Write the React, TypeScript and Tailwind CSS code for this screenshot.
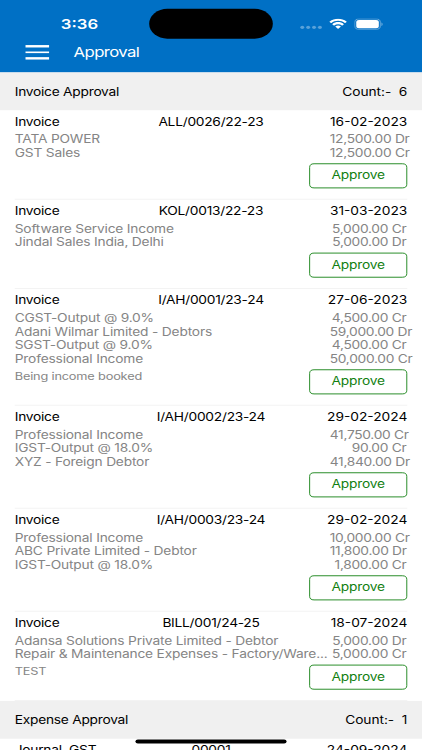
import React from "react";

type Entry = { name: string; amount: string };

type Voucher = {
  type: string;
  number: string;
  date: string;
  entries: Entry[];
  note?: string;
};

const invoices: Voucher[] = [
  {
    type: "Invoice",
    number: "ALL/0026/22-23",
    date: "16-02-2023",
    entries: [
      { name: "TATA POWER", amount: "12,500.00 Dr" },
      { name: "GST Sales", amount: "12,500.00 Cr" },
    ],
  },
  {
    type: "Invoice",
    number: "KOL/0013/22-23",
    date: "31-03-2023",
    entries: [
      { name: "Software Service Income", amount: "5,000.00 Cr" },
      { name: "Jindal Sales India, Delhi", amount: "5,000.00 Dr" },
    ],
  },
  {
    type: "Invoice",
    number: "I/AH/0001/23-24",
    date: "27-06-2023",
    entries: [
      { name: "CGST-Output @ 9.0%", amount: "4,500.00 Cr" },
      { name: "Adani Wilmar Limited - Debtors", amount: "59,000.00 Dr" },
      { name: "SGST-Output @ 9.0%", amount: "4,500.00 Cr" },
      { name: "Professional Income", amount: "50,000.00 Cr" },
    ],
    note: "Being income booked",
  },
  {
    type: "Invoice",
    number: "I/AH/0002/23-24",
    date: "29-02-2024",
    entries: [
      { name: "Professional Income", amount: "41,750.00 Cr" },
      { name: "IGST-Output @ 18.0%", amount: "90.00 Cr" },
      { name: "XYZ - Foreign Debtor", amount: "41,840.00 Dr" },
    ],
  },
  {
    type: "Invoice",
    number: "I/AH/0003/23-24",
    date: "29-02-2024",
    entries: [
      { name: "Professional Income", amount: "10,000.00 Cr" },
      { name: "ABC Private Limited - Debtor", amount: "11,800.00 Dr" },
      { name: "IGST-Output @ 18.0%", amount: "1,800.00 Cr" },
    ],
  },
  {
    type: "Invoice",
    number: "BILL/001/24-25",
    date: "18-07-2024",
    entries: [
      { name: "Adansa Solutions Private Limited - Debtor", amount: "5,000.00 Dr" },
      { name: "Repair & Maintenance Expenses - Factory/Ware...", amount: "5,000.00 Cr" },
    ],
    note: "TEST",
  },
];

function StatusBar() {
  return (
    <div className="flex h-[59px] items-center pl-[62px] pr-[40px]">
      <span className="w-[90px] text-[17px] font-semibold leading-5">3:36</span>
      <div className="h-[37px] w-[126px] rounded-full bg-black" />
      <div className="ml-auto flex items-center">
        <div className="mt-2 mr-[7px] flex gap-[2px]">
          <i className="size-1 rounded-full bg-white/35" />
          <i className="size-1 rounded-full bg-white/35" />
          <i className="size-1 rounded-full bg-white/35" />
          <i className="size-1 rounded-full bg-white/35" />
        </div>
        <svg className="mr-[7px] h-[14px] w-[19px]" viewBox="0 0 19 14" fill="white">
          <path d="M9.5 2.9c2.6 0 5 1 6.8 2.7.2.1.4.1.5 0l1.3-1.3c.2-.2.2-.4 0-.6C13.3-.9 5.7-.9.9 3.7c-.2.2-.2.4 0 .6l1.3 1.3c.1.1.4.1.5 0C4.5 3.9 6.9 2.9 9.5 2.9z" />
          <path d="M9.5 7.2c1.4 0 2.8.5 3.9 1.5.2.1.4.1.5 0l1.3-1.4c.2-.2.2-.4 0-.6-3.2-3-8.2-3-11.400 0-.2.2-.2.4 0 .6l1.300 1.400c.1.1.4.1.5 0C6.700 7.700 8.100 7.200 9.500 7.200z" />
          <path d="M12.100 10.200c.2-.2.2-.4 0-.5-1.500-1.300-3.700-1.300-5.200 0-.2.1-.2.4 0 .5l2.300 2.400c.2.2.4.2.6 0z" />
        </svg>
        <svg className="h-[14px] w-[29px]" viewBox="0 0 29 14">
          <rect x="0.5" y="0.5" width="26" height="13" rx="4.2" fill="none" stroke="white" strokeOpacity="0.45" />
          <rect x="2" y="2" width="23" height="10" rx="2.8" fill="white" />
          <path d="M27.7 5v4.2c.8-.4 1.3-1.2 1.3-2.1s-.5-1.700-1.300-2.100z" fill="white" fillOpacity="0.5" />
        </svg>
      </div>
    </div>
  );
}

function SectionHeader({ title, count }: { title: string; count: number }) {
  return (
    <div className="flex h-[47px] items-center justify-between bg-[#f0f0f0] px-[15px] text-black">
      <span className="tracking-[-0.25px]">{title}</span>
      <span className="whitespace-pre tracking-[-0.05px]">Count:-{"  "}{count}</span>
    </div>
  );
}

function VoucherTitle({ type, number, date }: { type: string; number: string; date: string }) {
  return (
    <div className="grid grid-cols-[1fr_auto_1fr] text-black">
      <span className="tracking-[-0.25px]">{type}</span>
      <span className="tracking-[-0.25px]">{number}</span>
      <span className="text-right">{date}</span>
    </div>
  );
}

function VoucherRow({ voucher }: { voucher: Voucher }) {
  return (
    <div className="mx-[15px] border-b border-[#f0f0f0] pt-[5px] pb-[13px] text-[#858585]">
      <VoucherTitle type={voucher.type} number={voucher.number} date={voucher.date} />
      <div className="mt-[5px] tracking-[-0.18px]">
        {voucher.entries.map((entry) => (
          <div key={entry.name} className="flex">
            <span className="w-[317px] whitespace-nowrap">{entry.name}</span>
            {/* long amounts run past the right edge */}
            <span className="ml-[4px] w-[78px] shrink-0 text-right whitespace-nowrap tracking-[-0.28px]">
              {entry.amount}
            </span>
          </div>
        ))}
      </div>
      <div className="mt-[5px] flex items-start justify-between tracking-[-0.18px]">
        <span className="text-[13px]">{voucher.note}</span>
        <button className="h-[31px] w-[100px] rounded-[5px] border border-[#118011] pb-[3px] text-[#118011]">
          Approve
        </button>
      </div>
    </div>
  );
}

export default function App() {
  return (
    <div className="h-[750px] w-[422px] overflow-hidden bg-white">
      {/* 430x932 device screen, scaled to the frame */}
      <div className="relative h-[932px] w-[430px] origin-top-left scale-x-[0.9814] scale-y-[0.8047] overflow-hidden bg-white font-['Inter',sans-serif] text-[14px] leading-[17px]">
        <header className="h-[90px] bg-[#0070c5] text-white">
          <StatusBar />
          <div className="-mt-[3px] flex items-center pl-[26px]">
            <div className="flex w-6 flex-col gap-[5px]">
              <i className="h-[2.6px] bg-white" />
              <i className="h-[2.6px] bg-white" />
              <i className="h-[2.6px] bg-white" />
            </div>
            <h1 className="ml-[25px] text-[17px] leading-[18px] tracking-[-0.6px]">Approval</h1>
          </div>
        </header>

        <SectionHeader title="Invoice Approval" count={6} />
        {invoices.map((voucher) => (
          <VoucherRow key={voucher.number} voucher={voucher} />
        ))}

        <SectionHeader title="Expense Approval" count={1} />
        <div className="mx-[15px] pt-[5px]">
          <VoucherTitle type="Journal, GST" number="00001" date="24-09-2024" />
        </div>

        {/* Home indicator */}
        <div className="absolute bottom-[8px] left-[138px] h-[5px] w-[154px] rounded-full bg-black" />
      </div>
    </div>
  );
}
